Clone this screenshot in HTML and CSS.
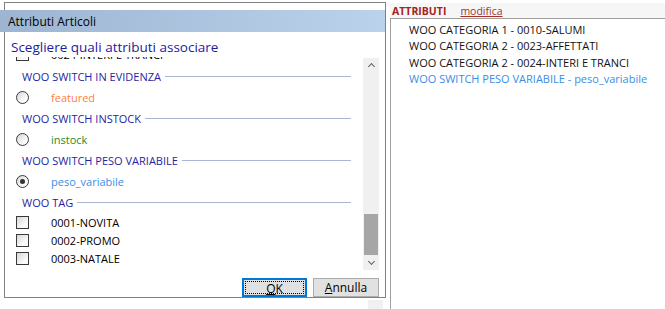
FILE: index.html
```html
<!DOCTYPE html>
<html lang="it">
<head>
    <meta charset="UTF-8">
    <title>Attributi Articoli</title>
    <link rel="stylesheet" href="styles.css">
</head>
<body>
    <div class="screen">
        <div class="left">
            <div class="dialog">
                <div class="titlebar">Attributi Articoli</div>
                <div class="prompt">Scegliere quali attributi associare</div>
                <div class="listbox">
                    <div class="items">
                        <div class="row first"><span class="box"></span><span>0024-INTERI E TRANCI</span></div>

                        <div class="group first-group">WOO SWITCH IN EVIDENZA</div>
                        <div class="row opt"><span class="box round"></span><span class="featured">featured</span></div>

                        <div class="group">WOO SWITCH INSTOCK</div>
                        <div class="row opt"><span class="box round"></span><span class="instock">instock</span></div>

                        <div class="group">WOO SWITCH PESO VARIABILE</div>
                        <div class="row opt"><span class="box round checked"></span><span class="peso">peso_variabile</span></div>

                        <div class="group">WOO TAG</div>
                        <div class="row"><span class="box"></span><span>0001-NOVITA</span></div>
                        <div class="row"><span class="box"></span><span>0002-PROMO</span></div>
                        <div class="row"><span class="box"></span><span>0003-NATALE</span></div>
                    </div>
                    <div class="scrollbar">
                        <span class="arrow up"></span>
                        <div class="track"><div class="thumb"></div></div>
                        <span class="arrow down"></span>
                    </div>
                </div>
                <div class="buttons">
                    <button class="btn default"><u>O</u>K</button>
                    <button class="btn"><u>A</u>nnulla</button>
                </div>
            </div>
            <div class="stub"></div>
        </div>

        <div class="panel">
            <div class="panel-head">
                <span class="head-title">ATTRIBUTI</span>
                <a class="head-link" href="#">modifica</a>
            </div>
            <ul class="panel-list">
                <li>WOO CATEGORIA 1 - 0010-SALUMI</li>
                <li>WOO CATEGORIA 2 - 0023-AFFETTATI</li>
                <li>WOO CATEGORIA 2 - 0024-INTERI E TRANCI</li>
                <li class="peso">WOO SWITCH PESO VARIABILE - peso_variabile</li>
            </ul>
        </div>
    </div>
</body>
</html>
```

FILE: styles.css
```css
body {
    margin: 0;
    background: #fff;
    color: #000;
    font-family: "Open Sans", "Segoe UI", sans-serif;
    font-size: 11px;
}

.screen {
    display: flex;
    height: 309px;
    overflow: hidden;
}

.left {
    width: 390px;
    flex: none;
}

/* dialog */
.dialog {
    box-sizing: border-box;
    width: 382px;
    height: 296px;
    margin: 2px 0 0 4px;
    padding-top: 7px;
    border: 1px solid #808080;
    background: #fff;
}

.titlebar {
    height: 22px;
    margin-left: -5px;
    padding-left: 8px;
    display: flex;
    align-items: center;
    background: linear-gradient(to right, #9db5d0, #bad2ec);
    font-size: 12px;
}

.prompt {
    height: 25px;
    box-sizing: border-box;
    padding: 6px 0 0 6px;
    line-height: 18px;
    font-size: 13.5px;
    color: #1b1ba0;
}

.listbox {
    height: 214px;
    display: flex;
    overflow: hidden;
}

.items {
    flex: 1;
    padding: 0 12px 0 11px;
}

.row {
    height: 18px;
    display: flex;
    align-items: center;
    white-space: nowrap;
}

.row.first {
    margin-top: -12px;
}

.row.opt {
    height: 21px;
}

.box {
    box-sizing: border-box;
    width: 13px;
    height: 13px;
    margin-right: 22px;
    border: 1px solid #3a3a3a;
    background: linear-gradient(135deg, #d6d6d6, #fbfbfb 70%);
    flex: none;
}

.box.round {
    border-radius: 50%;
    display: flex;
    align-items: center;
    justify-content: center;
}

.box.checked::after {
    content: "";
    width: 5px;
    height: 5px;
    border-radius: 50%;
    background: #333;
}

.group {
    height: 21px;
    display: flex;
    align-items: center;
    padding-left: 6px;
    color: #1f1f9f;
    white-space: nowrap;
}

.group.first-group {
    margin-top: 3px;
}

.group::after {
    content: "";
    flex: 1;
    height: 1px;
    margin-left: 4px;
    background: #a9b5d3;
}

.featured {
    color: #ff7f3a;
}

.instock {
    color: #2a8a1e;
}

.peso {
    color: #3b8de6;
}

.scrollbar {
    width: 16px;
    height: 212px;
    margin: 1px 6px 0 0;
    background: #f0f0f0;
    display: flex;
    flex-direction: column;
    align-items: center;
}

.arrow {
    height: 15px;
    width: 16px;
    display: flex;
    align-items: center;
    justify-content: center;
}

.arrow::after {
    content: "";
    width: 4px;
    height: 4px;
    border-left: 1.5px solid #606060;
    border-top: 1.5px solid #606060;
    transform: rotate(45deg);
    margin-top: 2px;
}

.arrow.down::after {
    transform: rotate(225deg);
    margin-top: -2px;
}

.track {
    flex: 1;
    width: 100%;
    display: flex;
    flex-direction: column;
    justify-content: flex-end;
}

.thumb {
    height: 41px;
    margin: 0 1px 0 1px;
    background: #a6a6a6;
}

.buttons {
    margin-top: 7px;
    padding-right: 6px;
    display: flex;
    justify-content: flex-end;
    gap: 6px;
}

.btn {
    box-sizing: border-box;
    width: 66px;
    height: 19px;
    padding: 0;
    border: 1px solid #adadad;
    background: #e1e1e1;
    font-family: "Open Sans", "Segoe UI", sans-serif;
    font-size: 12px;
    color: #000;
}

.btn.default {
    width: 65px;
    border: 2px solid #0078d7;
    outline: 1px dotted #000;
    outline-offset: -4px;
}

.btn u {
    text-decoration-thickness: 1px;
}

.stub {
    width: 15px;
    height: 9px;
    margin: 2px 0 0 368px;
    background: #f0f0f0;
}

/* right panel */
.panel {
    flex: 1;
    display: flex;
    flex-direction: column;
}

.panel-head {
    height: 15px;
    margin-top: 3px;
    padding-left: 2px;
    display: flex;
    align-items: center;
    gap: 14px;
    background: #f6f6f6;
    border-bottom: 1px solid #a0a0a0;
    font-size: 10.5px;
}

.head-title {
    font-weight: bold;
    color: #a32222;
}

.head-link {
    color: #a3322a;
}

.panel-list {
    flex: 1;
    margin: 0;
    padding: 3px 0 0 18px;
    list-style: none;
    border-left: 1px solid #a0a0a0;
    line-height: 16.33px;
    color: #111;
}
```
